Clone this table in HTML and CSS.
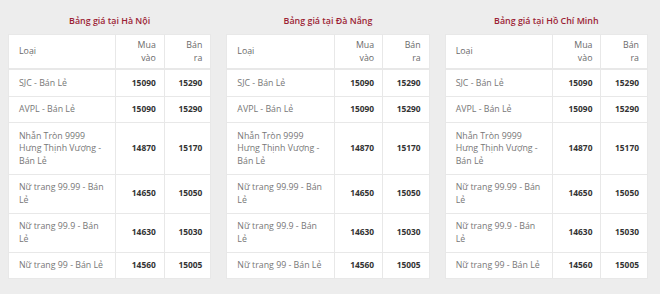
FILE: index.html
```html
<!DOCTYPE html>
<html lang="vi">
<head>
<meta charset="utf-8">
<link rel="stylesheet" href="styles.css">
</head>
<body>
<div class="grid">
  <section class="panel">
    <h3 class="title">Bảng giá tại Hà Nội</h3>
    <table class="prices">
      <colgroup><col class="c-name"><col class="c-buy"><col class="c-sell"></colgroup>
      <thead><tr><th class="name">Loại</th><th class="num">Mua<br>vào</th><th class="num">Bán<br>ra</th></tr></thead>
      <tbody>
        <tr><td>SJC - Bán Lẻ</td><td class="num">15090</td><td class="num">15290</td></tr>
        <tr><td>AVPL - Bán Lẻ</td><td class="num">15090</td><td class="num">15290</td></tr>
        <tr><td>Nhẫn Tròn 9999 Hưng Thịnh Vượng - Bán Lẻ</td><td class="num">14870</td><td class="num">15170</td></tr>
        <tr><td>Nữ trang 99.99 - Bán Lẻ</td><td class="num">14650</td><td class="num">15050</td></tr>
        <tr><td>Nữ trang 99.9 - Bán Lẻ</td><td class="num">14630</td><td class="num">15030</td></tr>
        <tr><td>Nữ trang 99 - Bán Lẻ</td><td class="num">14560</td><td class="num">15005</td></tr>
      </tbody>
    </table>
  </section>
  <section class="panel">
    <h3 class="title">Bảng giá tại Đà Nẵng</h3>
    <table class="prices">
      <colgroup><col class="c-name"><col class="c-buy"><col class="c-sell"></colgroup>
      <thead><tr><th class="name">Loại</th><th class="num">Mua<br>vào</th><th class="num">Bán<br>ra</th></tr></thead>
      <tbody>
        <tr><td>SJC - Bán Lẻ</td><td class="num">15090</td><td class="num">15290</td></tr>
        <tr><td>AVPL - Bán Lẻ</td><td class="num">15090</td><td class="num">15290</td></tr>
        <tr><td>Nhẫn Tròn 9999 Hưng Thịnh Vượng - Bán Lẻ</td><td class="num">14870</td><td class="num">15170</td></tr>
        <tr><td>Nữ trang 99.99 - Bán Lẻ</td><td class="num">14650</td><td class="num">15050</td></tr>
        <tr><td>Nữ trang 99.9 - Bán Lẻ</td><td class="num">14630</td><td class="num">15030</td></tr>
        <tr><td>Nữ trang 99 - Bán Lẻ</td><td class="num">14560</td><td class="num">15005</td></tr>
      </tbody>
    </table>
  </section>
  <section class="panel">
    <h3 class="title">Bảng giá tại Hồ Chí Minh</h3>
    <table class="prices">
      <colgroup><col class="c-name"><col class="c-buy"><col class="c-sell"></colgroup>
      <thead><tr><th class="name">Loại</th><th class="num">Mua<br>vào</th><th class="num">Bán<br>ra</th></tr></thead>
      <tbody>
        <tr><td>SJC - Bán Lẻ</td><td class="num">15090</td><td class="num">15290</td></tr>
        <tr><td>AVPL - Bán Lẻ</td><td class="num">15090</td><td class="num">15290</td></tr>
        <tr><td>Nhẫn Tròn 9999 Hưng Thịnh Vượng - Bán Lẻ</td><td class="num">14870</td><td class="num">15170</td></tr>
        <tr><td>Nữ trang 99.99 - Bán Lẻ</td><td class="num">14650</td><td class="num">15050</td></tr>
        <tr><td>Nữ trang 99.9 - Bán Lẻ</td><td class="num">14630</td><td class="num">15030</td></tr>
        <tr><td>Nữ trang 99 - Bán Lẻ</td><td class="num">14560</td><td class="num">15005</td></tr>
      </tbody>
    </table>
  </section>
</div>
</body>
</html>
```
FILE: styles.css
```css
html, body {
  margin: 0;
  padding: 0;
  background: #ededed;
}
body {
  font-family: "Open Sans", "Noto Sans", sans-serif;
  font-size: 8.8px;
  color: #777;
}
.grid {
  display: grid;
  grid-template-columns: repeat(3, 1fr);
  column-gap: 15px;
  padding: 14px 12px 0 8px;
}
.title {
  margin: 0 0 7px;
  text-align: center;
  font-size: 8.9px;
  line-height: 13px;
  font-weight: 600;
  color: #9c1f35;
}
.prices {
  width: 100%;
  table-layout: fixed;
  border-collapse: collapse;
  background: #fff;
}
.c-name { width: 53%; }
.c-buy { width: 24%; }
.c-sell { width: 23%; }
.prices th,
.prices td {
  border: 1px solid #e8e8e8;
  line-height: 12.5px;
  vertical-align: middle;
  text-align: left;
}
.prices th {
  padding: 4px 8px 4px 10px;
  font-weight: normal;
  color: #6a6a6a;
  border-bottom-width: 2px;
}
.prices td {
  padding: 6.5px 8px 6.5px 10px;
}
.prices .num {
  text-align: right;
}
.prices td.num {
  font-weight: 700;
  font-size: 8.4px;
  color: #333;
}
```
